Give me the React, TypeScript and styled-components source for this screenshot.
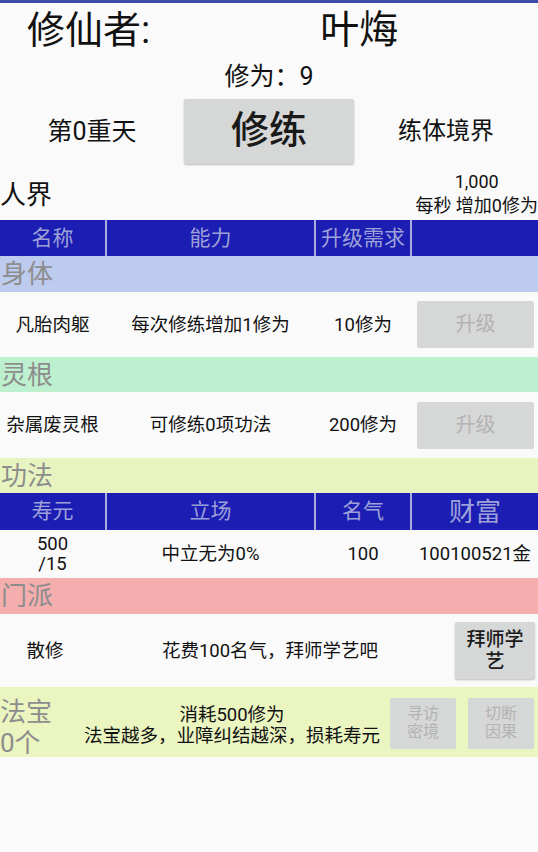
import React from "react";
import styled, { createGlobalStyle } from "styled-components";

const Global = createGlobalStyle`
  html, body { margin: 0; padding: 0; background: #fafafa; }
  * { box-sizing: border-box; }
`;

const FONT = `Roboto, "Noto Sans CJK SC", "Noto Sans", sans-serif`;

const Page = styled.div`
  width: 538px;
  min-height: 852px;
  background: #fafafa;
  font-family: ${FONT};
  color: #111;
  overflow: hidden;
`;

const TopStrip = styled.div`
  height: 3px;
  background: #3c4ca6;
`;

const TitleRow = styled.div`
  display: flex;
  align-items: center;
  height: 54px;
  padding-left: 27px;
  gap: 170px;
  font-size: 38px;
  line-height: 1;
  color: #111;
`;

const TitleName = styled.span`
  font-size: 39px;
`;

const ScoreRow = styled.div`
  display: flex;
  justify-content: center;
  align-items: center;
  height: 39px;
  font-size: 25px;
  line-height: 1;
`;

const ActionRow = styled.div`
  display: grid;
  grid-template-columns: 1fr 170px 1fr;
  align-items: center;
  height: 70px;
`;

const SideLabel = styled.div<{ $size: number }>`
  text-align: center;
  font-size: ${(p) => p.$size}px;
  line-height: 1;
`;

const Button = styled.button<{ $w: number; $h: number; $size: number; $disabled?: boolean; $weight?: number; $lh?: number; $px?: number }>`
  width: ${(p) => p.$w}px;
  height: ${(p) => p.$h}px;
  border: none;
  border-radius: 2px;
  background: #d6d7d7;
  font-family: ${FONT};
  font-size: ${(p) => p.$size}px;
  font-weight: ${(p) => p.$weight ?? 400};
  line-height: ${(p) => p.$lh ?? 1.15};
  color: ${(p) => (p.$disabled ? "#b3b3b3" : "#1a1a1a")};
  box-shadow: ${(p) => (p.$disabled ? "none" : "0 1px 2px rgba(0,0,0,0.25)")};
  padding: 0 ${(p) => p.$px ?? 8}px;
  display: flex;
  align-items: center;
  justify-content: center;
  text-align: center;
  cursor: pointer;
`;

const RealmRow = styled.div`
  display: flex;
  justify-content: space-between;
  align-items: center;
  height: 54px;
`;

const RealmName = styled.div`
  font-size: 26px;
  line-height: 1;
  padding-top: 3px;
`;

const RateBlock = styled.div`
  text-align: center;
  font-size: 18px;
  line-height: 24px;
  white-space: nowrap;
  padding-top: 2px;
`;

const Grid = styled.div<{ $h: number; $bg?: string }>`
  display: grid;
  grid-template-columns: 105px 207px 94px 1fr;
  column-gap: 2px;
  height: ${(p) => p.$h}px;
  background: ${(p) => p.$bg ?? "transparent"};
`;

const HeadCell = styled.div<{ $size?: number }>`
  background: #1b1db3;
  color: #9ea1d8;
  display: flex;
  align-items: center;
  justify-content: center;
  font-size: ${(p) => p.$size ?? 21}px;
  line-height: 1;
`;

const Cell = styled.div`
  display: flex;
  align-items: center;
  justify-content: center;
  text-align: center;
  font-size: 18.5px;
  line-height: 20px;
`;

const ButtonCell = styled.div`
  display: flex;
  align-items: center;
  padding-left: 5px;
`;

const SectionBar = styled.div<{ $bg: string; $h: number }>`
  background: ${(p) => p.$bg};
  height: ${(p) => p.$h}px;
  display: flex;
  align-items: center;
  padding-left: 1px;
  font-size: 26px;
  line-height: 1;
  color: #8d8d8d;
`;

const SectRow = styled.div`
  display: grid;
  grid-template-columns: 90px 1fr 88px;
  align-items: center;
  height: 73px;
`;

const SectButtonCell = styled.div`
  display: flex;
  justify-content: flex-end;
  padding-right: 3px;
`;

const TreasureRow = styled.div`
  display: grid;
  grid-template-columns: 82px 1fr 78px 78px;
  align-items: center;
  height: 70px;
  background: #eaf5c0;
`;

const TreasureLabel = styled.div`
  align-self: start;
  padding-top: 10px;
  font-size: 26px;
  line-height: 31px;
  color: #8d8d8d;
`;

const TreasureText = styled.div`
  text-align: center;
  font-size: 18.5px;
  line-height: 21px;
  padding-top: 6px;
`;

const TreasureBtnCell = styled.div`
  display: flex;
  justify-content: flex-end;
  padding-right: 4px;
`;

export default function App() {
  return (
    <Page>
      <Global />
      <TopStrip />
      <TitleRow>
        <span>修仙者:</span>
        <TitleName>叶烸</TitleName>
      </TitleRow>
      <ScoreRow>修为：9</ScoreRow>
      <ActionRow>
        <SideLabel $size={25}>第0重天</SideLabel>
        <Button $w={170} $h={65} $size={38} $weight={500}>
          修练
        </Button>
        <SideLabel $size={24}>练体境界</SideLabel>
      </ActionRow>
      <RealmRow>
        <RealmName>人界</RealmName>
        <RateBlock>
          1,000
          <br />
          每秒 增加0修为
        </RateBlock>
      </RealmRow>

      <Grid $h={36} $bg="#a9acdc">
        <HeadCell>名称</HeadCell>
        <HeadCell>能力</HeadCell>
        <HeadCell>升级需求</HeadCell>
        <HeadCell />
      </Grid>

      <SectionBar $bg="#bdcbee" $h={36}>身体</SectionBar>
      <Grid $h={65}>
        <Cell>凡胎肉躯</Cell>
        <Cell>每次修练增加1修为</Cell>
        <Cell>10修为</Cell>
        <ButtonCell>
          <Button $w={117} $h={47} $size={20} $disabled>
            升级
          </Button>
        </ButtonCell>
      </Grid>

      <SectionBar $bg="#bdf0cf" $h={35}>灵根</SectionBar>
      <Grid $h={66}>
        <Cell>杂属废灵根</Cell>
        <Cell>可修练0项功法</Cell>
        <Cell>200修为</Cell>
        <ButtonCell>
          <Button $w={117} $h={47} $size={20} $disabled>
            升级
          </Button>
        </ButtonCell>
      </Grid>

      <SectionBar $bg="#e8f4bf" $h={35}>功法</SectionBar>
      <Grid $h={37} $bg="#a9acdc">
        <HeadCell>寿元</HeadCell>
        <HeadCell>立场</HeadCell>
        <HeadCell>名气</HeadCell>
        <HeadCell $size={26}>财富</HeadCell>
      </Grid>
      <Grid $h={48}>
        <Cell>
          500
          <br />
          /15
        </Cell>
        <Cell>中立无为0%</Cell>
        <Cell>100</Cell>
        <Cell>100100521金</Cell>
      </Grid>

      <SectionBar $bg="#f4aeae" $h={36}>门派</SectionBar>
      <SectRow>
        <Cell>散修</Cell>
        <Cell>花费100名气，拜师学艺吧</Cell>
        <SectButtonCell>
          <Button $w={80} $h={57} $size={19} $weight={500} $lh={1.12}>
            拜师学艺
          </Button>
        </SectButtonCell>
      </SectRow>

      <TreasureRow>
        <TreasureLabel>
          法宝
          <br />
          0个
        </TreasureLabel>
        <TreasureText>
          消耗500修为
          <br />
          法宝越多，业障纠结越深，损耗寿元
        </TreasureText>
        <TreasureBtnCell>
          <Button $w={66} $h={51} $size={16} $disabled $lh={1.12} $px={15}>
            寻访密境
          </Button>
        </TreasureBtnCell>
        <TreasureBtnCell>
          <Button $w={66} $h={51} $size={16} $disabled $lh={1.12} $px={15}>
            切断因果
          </Button>
        </TreasureBtnCell>
      </TreasureRow>
    </Page>
  );
}
